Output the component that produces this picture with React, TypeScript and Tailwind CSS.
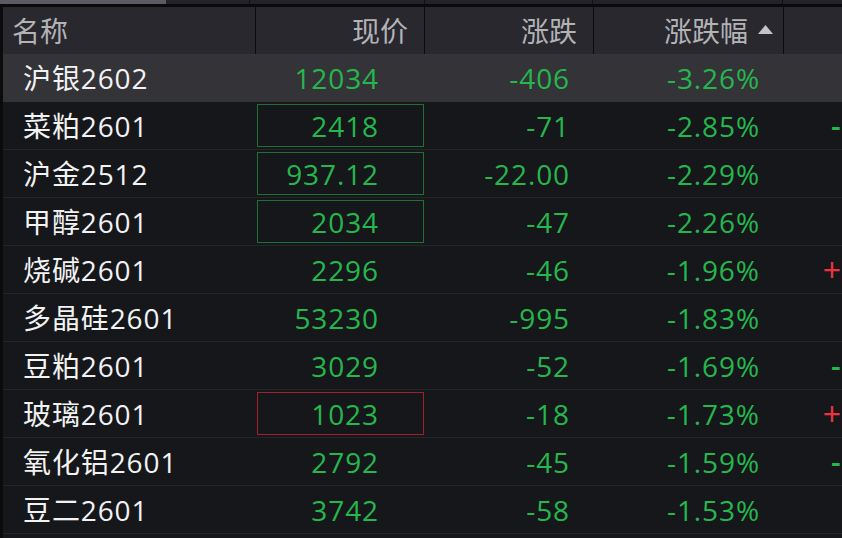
import React from 'react'

type Row = {
  name: string
  price: string
  change: string
  pct: string
  box?: 'green' | 'red'
  tail?: '+' | '-'
}

const rows: Row[] = [
  { name: '沪银2602', price: '12034', change: '-406', pct: '-3.26%' },
  { name: '菜粕2601', price: '2418', change: '-71', pct: '-2.85%', box: 'green', tail: '-' },
  { name: '沪金2512', price: '937.12', change: '-22.00', pct: '-2.29%', box: 'green' },
  { name: '甲醇2601', price: '2034', change: '-47', pct: '-2.26%', box: 'green' },
  { name: '烧碱2601', price: '2296', change: '-46', pct: '-1.96%', tail: '+' },
  { name: '多晶硅2601', price: '53230', change: '-995', pct: '-1.83%' },
  { name: '豆粕2601', price: '3029', change: '-52', pct: '-1.69%', tail: '-' },
  { name: '玻璃2601', price: '1023', change: '-18', pct: '-1.73%', box: 'red', tail: '+' },
  { name: '氧化铝2601', price: '2792', change: '-45', pct: '-1.59%', tail: '-' },
  { name: '豆二2601', price: '3742', change: '-58', pct: '-1.53%' },
  { name: '', price: '', change: '', pct: '' },
]

const font = { fontFamily: '"Open Sans", "Noto Sans CJK SC", sans-serif' }

export default function App() {
  return (
    <div className="w-[842px] h-[538px] overflow-hidden bg-[#15171b] text-[28px] leading-none" style={font}>
      {/* strip of the row above */}
      <div className="flex h-[4px] bg-[#222228]">
        <div className="w-[166px] bg-[#5b5b64]" />
        <div className="w-[84px] border-r border-[#111]" />
        <div className="w-[175px] border-r border-[#111]" />
        <div className="w-[168px] border-r border-[#111]" />
        <div className="w-[190px] border-r border-[#111]" />
      </div>
      <div className="h-[3px] bg-[#0a0a0b]" />

      <div className="border-l-[3px] border-[#0b0b0c]">
        {/* header */}
        <div className="flex h-[47px] bg-[#28282e] text-[#b3b3b6]">
          <div className="w-[253px] border-r border-[#0c0c0d] flex items-center pl-[9px]">名称</div>
          <div className="w-[169px] border-r border-[#0c0c0d] flex items-center justify-end pr-[16px]">现价</div>
          <div className="w-[169px] border-r border-[#0c0c0d] flex items-center justify-end pr-[16px]">涨跌</div>
          <div className="w-[190px] border-r border-[#0c0c0d] flex items-center justify-end pr-[10px] gap-[10px]">
            <span>涨跌幅</span>
            <svg width="15" height="9" viewBox="0 0 15 9" className="mt-[-2px]">
              <path d="M7.5 0 L15 9 L0 9 Z" fill="#c4c4c8" />
            </svg>
          </div>
          <div className="flex-1" />
        </div>

        {rows.map((r, i) => (
          <div
            key={i}
            className={
              'flex h-[48px] border-b tracking-[0.9px] ' +
              (i === 0 ? 'bg-[#333338] border-[#333338] h-[47px]' : 'border-[#23262b]')
            }
          >
            <div className="w-[253px] flex items-center pl-[20px] text-[#f2f2f2]">{r.name}</div>
            <div className="w-[169px] pl-[1px] pr-[1px] py-[2px]">
              <div
                className={
                  'h-full flex items-center justify-end pr-[44px] text-[#25b74d] border ' +
                  (r.box === 'green'
                    ? 'border-[#1f7036]'
                    : r.box === 'red'
                      ? 'border-[#a61d2c]'
                      : 'border-transparent')
                }
              >
                {r.price}
              </div>
            </div>
            <div className="w-[169px] flex items-center justify-end pr-[24px] text-[#25b74d]">{r.change}</div>
            <div className="w-[190px] flex items-center justify-end pr-[24px] text-[#25b74d]">{r.pct}</div>
            <div className="flex-1 flex items-center">
              {r.tail === '+' && <span className="pl-[39px] text-[32px] text-[#ee3340]">+</span>}
              {r.tail === '-' && <span className="pl-[47px] text-[30px] font-semibold text-[#25b74d]">-</span>}
            </div>
          </div>
        ))}
      </div>
    </div>
  )
}
